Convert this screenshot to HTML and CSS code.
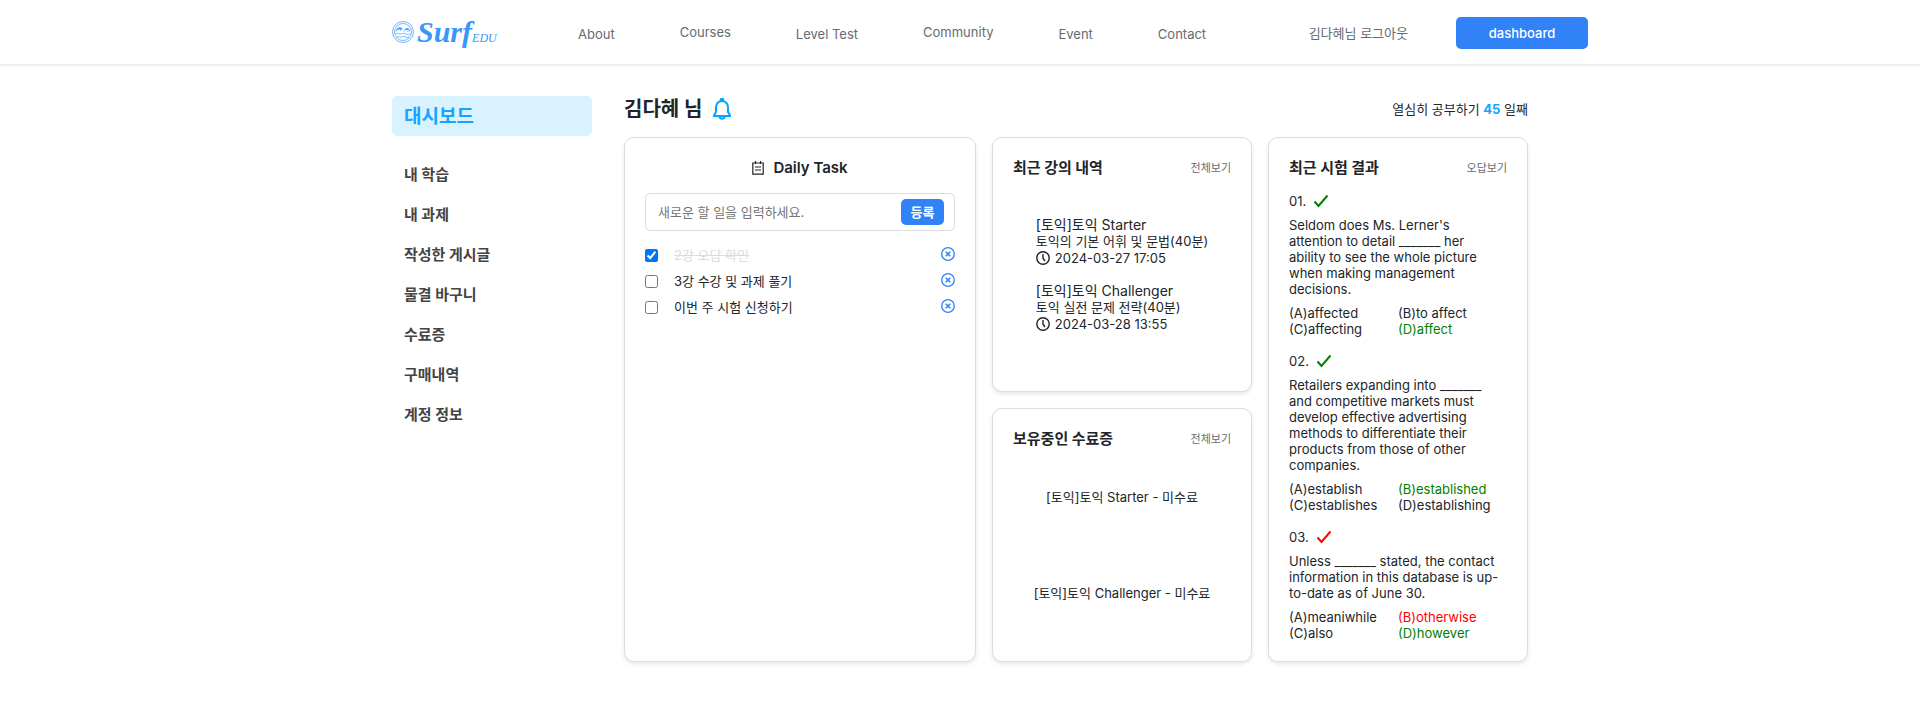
FILE: index.html
```html
<!DOCTYPE html>
<html lang="ko">
<head>
<meta charset="utf-8">
<meta name="viewport" content="width=device-width, initial-scale=1">
<title>Surf EDU</title>
<link rel="stylesheet" href="styles.css">
</head>
<body>
<svg class="sprite" aria-hidden="true">
  <symbol id="check" viewBox="0 0 16 14"><path d="M1.500 7.500 5.500 12 14.500 1.500" fill="none" stroke="currentColor" stroke-width="2"/></symbol>
  <symbol id="remove" viewBox="0 0 14 14"><g fill="none" stroke="currentColor" stroke-width="1.300"><circle cx="7" cy="7" r="6.300"/><path d="m4.700 4.700 4.600 4.600M9.300 4.700 4.700 9.300" stroke-width="1.500"/></g></symbol>
  <symbol id="clock" viewBox="0 0 14 14"><g fill="none" stroke="currentColor" stroke-width="1.400"><circle cx="7" cy="7" r="6.200"/><path d="M7 3v4.200l2 2.800"/></g></symbol>
</svg>
<header class="header">
  <div class="header-inner">
    <a class="logo" href="#">
      <svg class="logo-mark" viewBox="0 0 22 22" fill="none" stroke="currentColor" stroke-width=".7" aria-hidden="true">
        <circle cx="11" cy="11" r="10.500"/><circle cx="11" cy="11" r="8.500"/>
        <path d="M4 10.500c.5-4 4.500-5 6.500-2.500-2-.5-2.500 1-1.500 2M12 10.500c.5-3.500 4.500-4 6-.5-2-.8-3 0-2 1M3.500 13c2.500-1.500 3.500.8 5.500 0s3-1.200 5 0 3 0 4.500 0M5 16c2-1 3 .7 4.500 0s3-1 4.500 0 2 .3 3 0"/>
        <path d="M5.500 9c1-1.500 2.500-1.800 4-1M13.500 9c1-1.200 2-1.300 3-.5" stroke-width="1.300"/>
      </svg>
      <span class="logo-name">Surf</span><span class="logo-sub">EDU</span>
    </a>
    <nav class="menu">
      <a href="#">About</a>
      <a class="has-sub" href="#">Courses</a>
      <a href="#">Level Test</a>
      <a class="has-sub" href="#">Community</a>
      <a href="#">Event</a>
      <a href="#">Contact</a>
    </nav>
    <div class="account">
      <a class="logout" href="#">김다혜님 로그아웃</a>
      <button class="dash-button" type="button">dashboard</button>
    </div>
  </div>
</header>
<div class="page">
  <nav class="sidebar">
    <a class="side-link active" href="#">대시보드</a>
    <a class="side-link" href="#">내 학습</a>
    <a class="side-link" href="#">내 과제</a>
    <a class="side-link" href="#">작성한 게시글</a>
    <a class="side-link" href="#">물결 바구니</a>
    <a class="side-link" href="#">수료증</a>
    <a class="side-link" href="#">구매내역</a>
    <a class="side-link" href="#">계정 정보</a>
  </nav>
  <main class="content">
    <div class="greeting">
      <h1 class="user">김다혜 님</h1>
      <svg class="bell" viewBox="0 0 18 22" fill="none" stroke="currentColor" stroke-width="2" aria-hidden="true"><circle cx="9" cy="2" r="1.300"/><path d="M3 14V9a6 6 0 0 1 12 0v5l2 3.500v.5H1v-.5zM6 19q3 3.600 6 0"/></svg>
      <p class="streak">열심히 공부하기 <strong>45</strong> 일째</p>
    </div>
    <div class="cards">
      <section class="card tall">
        <h2 class="task-title">
          <svg class="note" viewBox="0 0 12 14" fill="none" stroke="currentColor" stroke-width="1.200" aria-hidden="true"><path d="M.8 2h10.400v11.200H.8zM3.500 0v3M8.500 0v3M3 6h6M3 9h6"/></svg>
          Daily Task
        </h2>
        <form class="task-form">
          <input class="task-input" type="text" placeholder="새로운 할 일을 입력하세요." aria-label="새로운 할 일">
          <button class="task-add" type="button">등록</button>
        </form>
        <ul class="tasks">
          <li class="task"><input id="t1" type="checkbox" checked><label for="t1">2강 오답 확인</label><button class="remove" type="button" aria-label="삭제"><svg><use href="#remove"/></svg></button></li>
          <li class="task"><input id="t2" type="checkbox"><label for="t2">3강 수강 및 과제 풀기</label><button class="remove" type="button" aria-label="삭제"><svg><use href="#remove"/></svg></button></li>
          <li class="task"><input id="t3" type="checkbox"><label for="t3">이번 주 시험 신청하기</label><button class="remove" type="button" aria-label="삭제"><svg><use href="#remove"/></svg></button></li>
        </ul>
      </section>
      <section class="card">
        <div class="card-head"><h2>최근 강의 내역</h2><a href="#">전체보기</a></div>
        <div class="lectures">
          <div class="lecture-list">
            <div class="lecture"><p class="course">[토익]토익 Starter</p><p>토익의 기본 어휘 및 문법(40분)</p><p class="time"><svg class="clock"><use href="#clock"/></svg>2024-03-27 17:05</p></div>
            <div class="lecture"><p class="course">[토익]토익 Challenger</p><p>토익 실전 문제 전략(40분)</p><p class="time"><svg class="clock"><use href="#clock"/></svg>2024-03-28 13:55</p></div>
          </div>
        </div>
      </section>
      <section class="card tall">
        <div class="card-head"><h2>최근 시험 결과</h2><a href="#">오답보기</a></div>
        <div class="questions">
          <article class="question">
            <p class="number">01. <svg class="mark right"><use href="#check"/></svg></p>
            <p class="sentence">Seldom does Ms. Lerner's attention to detail _______ her ability to see the whole picture when making management decisions.</p>
            <div class="options"><span>(A)affected</span><span>(B)to affect</span><span>(C)affecting</span><span class="right">(D)affect</span></div>
          </article>
          <article class="question">
            <p class="number">02. <svg class="mark right"><use href="#check"/></svg></p>
            <p class="sentence">Retailers expanding into _______ and competitive markets must develop effective advertising methods to differentiate their products from those of other companies.</p>
            <div class="options"><span>(A)establish</span><span class="right">(B)established</span><span>(C)establishes</span><span>(D)establishing</span></div>
          </article>
          <article class="question">
            <p class="number">03. <svg class="mark wrong"><use href="#check"/></svg></p>
            <p class="sentence">Unless _______ stated, the contact information in this database is up-to-date as of June 30.</p>
            <div class="options"><span>(A)meaniwhile</span><span class="wrong">(B)otherwise</span><span>(C)also</span><span class="right">(D)however</span></div>
          </article>
        </div>
      </section>
      <section class="card">
        <div class="card-head"><h2>보유중인 수료증</h2><a href="#">전체보기</a></div>
        <div class="certificates"><p>[토익]토익 Starter - 미수료</p><p>[토익]토익 Challenger - 미수료</p></div>
      </section>
    </div>
  </main>
</div>
</body>
</html>
```
FILE: styles.css
```css
* { box-sizing: border-box; }
body, h1, h2, p, ul { margin: 0; padding: 0; }
body {
  font-family: Inter, "Noto Sans CJK KR", sans-serif;
  font-size: 13px;
  line-height: 16px;
  color: #212529;
  background: #fff;
}
a { color: inherit; text-decoration: none; }
button, input { font: inherit; }
button { border: 0; cursor: pointer; }
svg { flex: none; }
.sprite { display: none; }

.header { background: #fff; box-shadow: 0 1px 4px rgba(0, 0, 0, .12); }
.header-inner {
  display: flex;
  align-items: center;
  max-width: 1256px;
  height: 64px;
  margin: 0 auto;
  padding-left: 60px;
  color: #666b70;
}
.logo { display: flex; align-items: center; width: 186px; color: #3797fb; font-family: "Liberation Serif", serif; font-style: italic; }
.logo-mark { width: 22px; height: 22px; margin-right: 3px; }
.logo-name { font-size: 30px; font-weight: 700; }
.logo-sub { font-size: 12px; padding-top: 12px; }
.menu { display: flex; align-items: center; gap: 65px; white-space: nowrap; padding-top: 4px; }
.has-sub { padding-bottom: 4px; }
.account { display: flex; align-items: center; gap: 48px; margin-left: auto; padding-top: 2px; white-space: nowrap; }
.dash-button { width: 132px; height: 32px; border-radius: 5px; background: #3182f6; color: #fff; font-weight: 500; }

.page { display: flex; gap: 32px; max-width: 1200px; margin: 0 auto; padding: 32px; }
.sidebar { flex: none; display: flex; flex-direction: column; width: 200px; }
.side-link { padding: 2px 12px 0; font-size: 15px; line-height: 38px; font-weight: 700; color: #444; }
.side-link.active { margin-bottom: 18px; border-radius: 5px; background: #d9f2ff; color: #17a3ff; font-size: 19px; }
.content { flex: 1; min-width: 0; }
.greeting { display: flex; align-items: center; height: 26px; margin-bottom: 15px; }
.user { font-size: 20px; line-height: 26px; font-weight: 700; }
.bell { width: 18px; height: 22px; margin-left: 11px; color: #00a6ff; }
.streak { margin-left: auto; }
.streak strong { color: #17a3ff; }

.cards { display: grid; grid-template-columns: 352fr 260fr 260fr; grid-template-rows: 1fr 1fr; gap: 16px; }
.card { display: flex; flex-direction: column; padding: 20px; border: 1px solid #dcdcdc; border-radius: 10px; box-shadow: 0 2px 4px rgba(0, 0, 0, .1); background: #fff; }
.tall { grid-row: span 2; }
.card-head { display: flex; align-items: center; justify-content: space-between; height: 20px; }
.card-head h2 { font-size: 15px; font-weight: 700; }
.card-head a { font-size: 11px; color: #666b70; }

.task-title { display: flex; align-items: center; justify-content: center; gap: 9px; height: 20px; font-size: 15px; font-weight: 600; }
.note { width: 12px; height: 14px; }
.task-form { display: flex; align-items: center; height: 38px; margin-top: 15px; padding: 0 10px 0 12px; border: 1px solid #dcdcdc; border-radius: 5px; }
.task-input { flex: 1; min-width: 0; padding: 0; border: 0; outline: 0; }
.task-input::placeholder { color: #757575; }
.task-add { width: 43px; height: 26px; padding: 0; border-radius: 5px; background: #3182f6; color: #fff; font-weight: 700; }
.tasks { list-style: none; margin-top: 11px; }
.task { display: flex; align-items: center; height: 26px; }
.task input { width: 13px; height: 13px; margin: 0 16px 0 0; }
.task input:checked + label { color: #dcdcdc; text-decoration: line-through; }
.remove { display: flex; margin-left: auto; padding: 0 0 2px; background: none; color: #3182f6; }
.remove svg { width: 14px; height: 14px; }

.lectures { flex: 1; display: flex; align-items: center; justify-content: center; white-space: nowrap; }
.lecture-list { display: grid; gap: 16px; }
.lecture p { line-height: 17px; }
.lecture .course { font-size: 14px; }
.lecture .time { display: flex; align-items: center; gap: 5px; line-height: 16px; }
.clock { width: 14px; height: 14px; }
.certificates { flex: 1; display: grid; grid-template-rows: 1fr 1fr; place-items: center; }

.questions { display: grid; gap: 16px; margin-top: 15px; }
.question { display: grid; gap: 8px; }
.number { display: flex; align-items: center; gap: 7px; }
.mark { width: 16px; height: 14px; }
.sentence { padding-right: 4px; }
.options { display: grid; grid-template-columns: 1fr 1fr; }
.right { color: green; }
.wrong { color: red; }
```
